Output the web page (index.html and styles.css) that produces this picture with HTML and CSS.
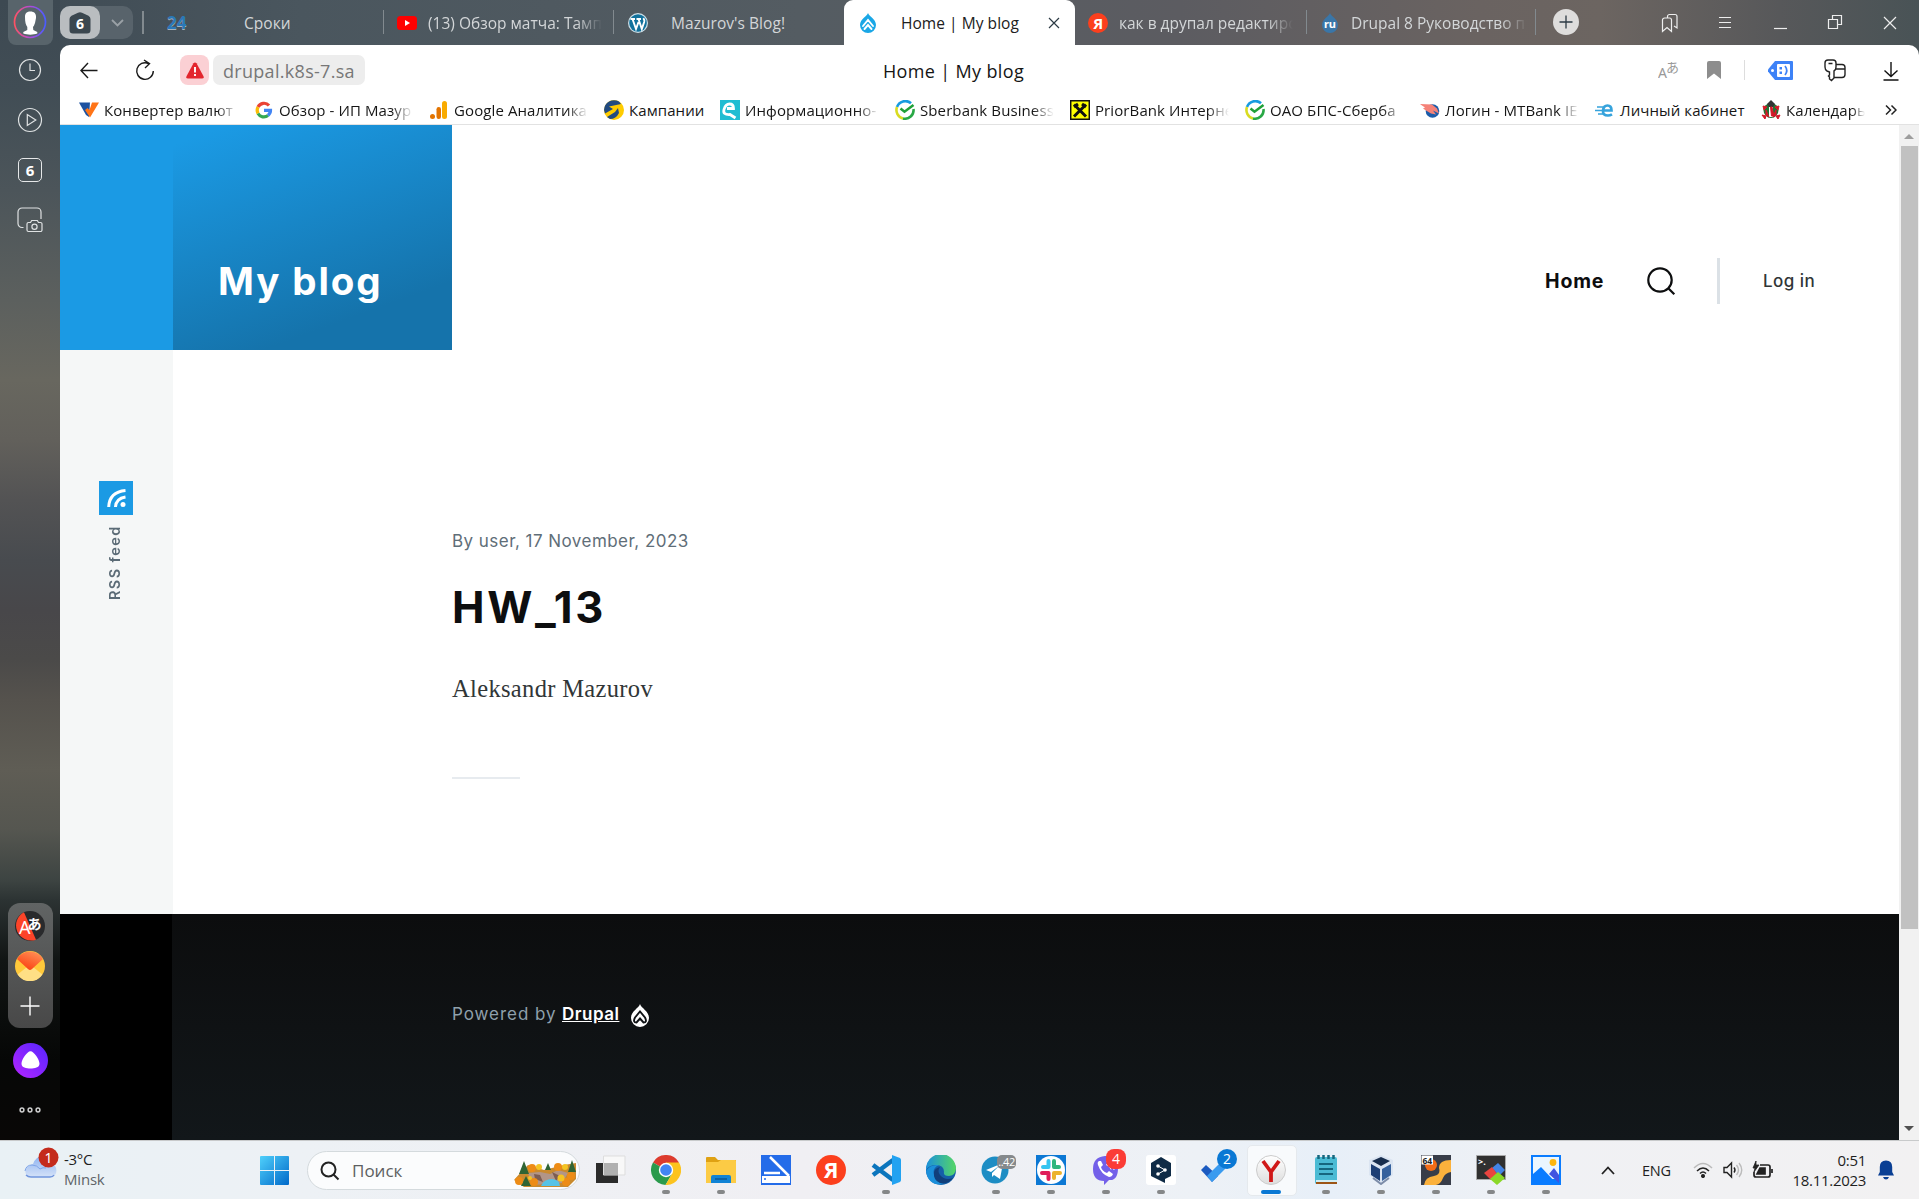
FILE: index.html
```html
<!DOCTYPE html>
<html lang="ru">
<head>
<meta charset="utf-8">
<title>Home | My blog</title>
<link rel="stylesheet" href="styles.css">
</head>
<body>
<div class="desktop">
  <div class="browser">
    <aside class="sidebar">
      <div class="avatar">
        <svg width="34" height="34" viewBox="0 0 34 34"><defs><linearGradient id="ring"><stop offset="0" stop-color="#ff5263"/><stop offset=".5" stop-color="#b14bd8"/><stop offset="1" stop-color="#4a5cff"/></linearGradient></defs><circle cx="17" cy="17" r="15.500" fill="none" stroke="url(#ring)" stroke-width="1.700"/><path d="M12 12c0-4 2-5.500 5.500-5.500s6 2 5.500 6.500l-1 5c-.7 2-1.200 3-2 4l.3 3 4 2v1.500c-4 1.500-10 1.500-14 0V27l4-2v-3c-1.500-2-2.300-5-2.300-10z" fill="#fff"/></svg>
      </div>
      <svg class="side-icon" viewBox="0 0 26 26"><circle cx="13" cy="13" r="10.500"/><path d="M13 6.500V13.500H18"/></svg>
      <svg class="side-icon" viewBox="0 0 26 26"><circle cx="13" cy="13" r="11.500"/><path d="M10.300 7.500v11l8.500-5.500z"/></svg>
      <div class="side-icon side-count">6</div>
      <svg class="side-icon" viewBox="0 0 26 26"><path d="M6.500 20.500H5a4 4 0 0 1-4-4V5a4 4 0 0 1 4-4h15a4 4 0 0 1 4 4v7"/><path d="M10 17a1.500 1.500 0 0 1 1.500-1.500h2l1.200-2h5.600l1.200 2h2a1.500 1.500 0 0 1 1.500 1.500v6a1.500 1.500 0 0 1-1.500 1.500h-12A1.500 1.500 0 0 1 10 23z"/><circle cx="17.500" cy="19.700" r="2.600"/></svg>
      <div class="side-apps">
        <svg width="30" height="30" viewBox="0 0 30 30"><circle cx="15" cy="15" r="15" fill="#292a2c"/><path d="M9 1.300A15 15 0 0 0 21 28.700z" fill="#fc4429"/><text x="4" y="23" font-size="18" fill="#fff" class="noto">A</text><text x="12.500" y="18" font-size="14" font-weight="700" fill="#fff" class="jp">あ</text></svg>
        <svg width="30" height="30" viewBox="0 0 30 30"><defs><linearGradient id="mail" x1="1" x2=".4" y2="1"><stop offset="0" stop-color="#ff9a5e"/><stop offset="1" stop-color="#fb4214"/></linearGradient></defs><circle cx="15" cy="15" r="15" fill="#ffc93b"/><path d="M2.500 23.500L12 16h6l9.500 7.500A15 15 0 0 1 2.500 23.500z" fill="#ffdf85"/><path d="M2 8A15 15 0 0 1 28 8L17 18q-2 1.800-4 0z" fill="url(#mail)"/></svg>
        <svg width="30" height="30" viewBox="0 0 30 30" stroke="#fff" stroke-width="1.400"><path d="M15 5.500v19M5.500 15h19"/></svg>
      </div>
      <svg class="alice" width="35" height="35" viewBox="0 0 35 35"><defs><linearGradient id="ali" x1="0" y1="1" x2="1" y2="0"><stop offset="0" stop-color="#b624ff"/><stop offset="1" stop-color="#5426ff"/></linearGradient></defs><circle cx="17.500" cy="17.500" r="17.500" fill="url(#ali)"/><path d="M17.500 8.300c3.500 0 9 8.500 9 12.500s-5 4.700-9 4.700-9-.7-9-4.700 5.500-12.500 9-12.500z" fill="#fff"/></svg>
      <svg class="more" width="24" height="8" viewBox="0 0 24 8" fill="none" stroke="#ccc" stroke-width="1.500"><circle cx="4" cy="4" r="1.900"/><circle cx="12" cy="4" r="1.900"/><circle cx="20" cy="4" r="1.900"/></svg>
    </aside>

    <div class="window">
      <div class="tabs">
        <div class="tab-group">
          <div class="group-count"><svg width="22" height="22" viewBox="0 0 22 22"><path d="M9 .8q2-1.100 4 0l6.500 3Q21.500 5 21.500 7v11q0 3.500-3.500 3.500H4Q.5 21.500.5 18V7q0-2 2-3.200z" fill="#3b474f"/><text x="11" y="16.500" text-anchor="middle" font-size="14" font-weight="700" fill="#fff" class="noto">6</text></svg></div>
          <svg width="33" height="33" viewBox="0 0 33 33" fill="none" stroke="#9aa1a6" stroke-width="1.800"><path d="M12 14l5.500 5.500L23 14"/></svg>
        </div>
        <div class="tab t1"><span class="fav b24">24</span><span class="tab-text s-deadlines">Сроки</span></div>
        <div class="tab t2"><svg class="fav" viewBox="0 0 20 20"><rect y="3" width="20" height="14" rx="3.500" fill="#f00"/><path d="M8 7v6l5-3z" fill="#fff"/></svg><span class="tab-text fade-tab">(13) Обзор матча: Тамп</span></div>
        <div class="tab t3"><svg class="fav" viewBox="0 0 20 20"><circle cx="10" cy="10" r="10" fill="#cfe0e8"/><circle cx="10" cy="10" r="8.800" fill="#11719c"/><path d="M2.500 6h4.500M4.500 6l3.500 10 2.500-7M8.500 6h4.500M10.500 6l3.300 10 2.400-7q.6-2-.9-3.800" stroke="#fff" stroke-width="1.900" fill="none"/></svg><span class="tab-text s-blog">Mazurov's Blog!</span></div>
        <div class="tab active"><svg class="fav" viewBox="0 0 20 20"><path d="M10 0c1 3.500 8 6 8 12a8 8 0 0 1-16 0C2 6 9 3.500 10 0z" fill="#1aa7e6"/><path d="M5 13L10 7l5 6M6.500 16L10 12l3.500 4" fill="none" stroke="#fff" stroke-width="1.900" stroke-linecap="round"/></svg><span class="tab-text s-home">Home | My blog</span><svg class="x" width="12" height="12" viewBox="0 0 12 12" stroke="#2c3a44" stroke-width="1.200"><path d="M1 1l10 10M11 1L1 11"/></svg></div>
        <div class="tab t5"><svg class="fav" viewBox="0 0 20 20"><circle cx="10" cy="10" r="10" fill="#fc3f1d"/><text x="10" y="15.500" text-anchor="middle" font-size="15" font-weight="700" fill="#fff" class="noto">Я</text></svg><span class="tab-text fade-tab">как в друпал редактирс</span></div>
        <div class="tab t6"><svg class="fav" viewBox="0 0 20 20"><path d="M10 0c1 3.500 8 6 8 12a8 8 0 0 1-16 0C2 6 9 3.500 10 0z" fill="#3a76a8"/><text x="10" y="15" text-anchor="middle" font-size="11" font-weight="700" fill="#fff" class="noto">ru</text></svg><span class="tab-text fade-tab">Drupal 8 Руководство п</span></div>
        <div class="new-tab"><svg width="26" height="26" viewBox="0 0 26 26"><circle cx="13" cy="13" r="13" fill="#dedddc"/><path d="M13 6.500v13M6.500 13h13" stroke="#2c3a44" stroke-width="1.300"/></svg></div>
        <div class="win-controls">
          <svg width="20" height="20" viewBox="0 0 20 20"><path d="M2.500 18.500V7a2 2 0 0 1 2-2h5a2 2 0 0 1 2 2v11.500L7 14.500zM7.500 5V3.500a2 2 0 0 1 2-2h5.500a2 2 0 0 1 2 2V15l-3-2"/></svg>
          <svg width="20" height="20" viewBox="0 0 20 20"><path d="M4 4.500h12M4 9.500h12M4 14.500h12"/></svg>
          <svg width="20" height="20" viewBox="0 0 20 20"><path d="M4 15.500h13"/></svg>
          <svg width="20" height="20" viewBox="0 0 20 20"><path d="M3.500 6.500h9v9h-9zM7.500 6.500v-4h9v9h-4"/></svg>
          <svg width="20" height="20" viewBox="0 0 20 20"><path d="M4 4l12 12M16 4L4 16"/></svg>
        </div>
      </div>

      <div class="chrome">
        <div class="toolbar">
          <svg class="back" width="20" height="20" viewBox="0 0 20 20"><path d="M18.500 10.500H2M9 3L2 10.500 9 18"/></svg>
          <svg class="reload" width="22" height="24" viewBox="0 0 22 24"><path d="M14.500 5.500A8.300 8.300 0 1 0 19.300 13M10 2l5.500 3.700L11 10"/></svg>
          <div class="warn"><svg width="18" height="17" viewBox="0 0 18 17"><path d="M7.500 1.200q1.500-1.600 3 0l7 13q.8 2.300-1.500 2.300H2Q-.3 16.500.5 14.200z" fill="#e3262e"/><path d="M9 5v5.500M9 12v2" stroke="#fff" stroke-width="1.900"/></svg></div>
          <div class="url">drupal.k8s-7.sa</div>
          <div class="page-title">Home | My blog</div>
          <div class="tool-icons">
            <svg width="22" height="26" viewBox="0 0 22 26" fill="#999"><text x="0" y="21" font-size="14" class="noto">A</text><text x="8" y="14.500" font-size="13" class="jp">あ</text></svg>
            <svg width="14" height="18" viewBox="0 0 14 18"><path d="M0 2q0-2 2-2h10q2 0 2 2v16l-7-5.500L0 18z" fill="#8d8d8d"/></svg>
            <i class="tool-sep"></i>
            <svg width="25" height="19" viewBox="0 0 25 19"><path d="M7 0h17q1 0 1 1v17q0 1-1 1H7L0 10.500v-2z" fill="#3d82f7"/><rect x="9" y="3" width="13" height="13" rx="1" fill="#fff"/><circle cx="4.500" cy="9.500" r="1.500" fill="#fff"/><path d="M11.500 6h2.500v2.500h-2.500zM11.500 10.500h2.500V13h-2.500z" fill="#3d82f7"/><path d="M17 5q3.500 4.500 0 9" stroke="#3d82f7" stroke-width="1.700" fill="none"/></svg>
            <svg width="24" height="24" viewBox="0 0 24 24" fill="none" stroke="#222" stroke-width="1.400"><path d="M4 13Q2 12 2 9V5q0-3 3-3h5q3 0 3 3v4q0 3-2 4v7l-2.500 2.500L6.500 21v-2l-1-1 1-1v-3zM5.500 5.500h4M13 6.500h6q3 0 3 3v7q0 3-3 3h-8M13 11h9"/></svg>
            <svg width="16" height="20" viewBox="0 0 16 20" fill="none" stroke="#111" stroke-width="1.400"><path d="M8 1v14M1.500 9.500L8 15.500l6.500-6M.5 19h15"/></svg>
          </div>
        </div>
        <div class="bookmarks">
          <div class="bm b1"><svg viewBox="0 0 20 20"><path d="M0 2.500h11L10 17 7 15z" fill="#1d52a0"/><path d="M13 2.500h7L11 17.500 6 10l2.500-2 2 2z" fill="#ff7417"/></svg><span>Конвертер валют</span></div>
          <div class="bm b2"><svg viewBox="0 0 20 20" fill="none" stroke-width="3.200"><path d="M15 5.500A6.700 6.700 0 0 0 4 7" stroke="#ea4335"/><path d="M4 7a6.700 6.700 0 0 0 0 6.500" stroke="#fbbc05"/><path d="M4 13.500a6.700 6.700 0 0 0 10 2" stroke="#34a853"/><path d="M14 15.500a6.700 6.700 0 0 0 2.500-5.200H10" stroke="#4285f4"/></svg><span>Обзор - ИП Мазур</span></div>
          <div class="bm b3"><svg viewBox="0 0 20 20"><rect x="13" y="1" width="5" height="18" rx="2.500" fill="#f9ab00"/><rect x="7.500" y="7" width="4.500" height="12" rx="2.200" fill="#e37400"/><circle cx="3.500" cy="16.500" r="2.500" fill="#e37400"/></svg><span>Google Аналитика</span></div>
          <div class="bm b4"><svg viewBox="0 0 20 20"><circle cx="10" cy="10" r="10" fill="#fc0"/><path d="M0 10A10 10 0 0 1 15 1.500L17 4 5 6.500 9 9l-8 4.500zM3 17l8-5 3-4 1 5q-3 6-9 6z" fill="#214a80"/></svg><span>Кампании</span></div>
          <div class="bm b5"><svg viewBox="0 0 20 20"><path d="M0 0h20v20H0z" fill="#20bdd2"/><path d="M7 8.500h6.500Q13.500 4 9.500 4T4 9.500t6 5l5.500 3.500" stroke="#fff" stroke-width="2.800" fill="none"/></svg><span>Информационно-</span></div>
          <div class="bm b6"><svg viewBox="0 0 20 20" fill="none" stroke-width="2.600"><path d="M16 3.300A8.700 8.700 0 0 0 2 7" stroke="#179be0"/><path d="M2 7a8.700 8.700 0 0 0 6 11.500" stroke="#d9dc21"/><path d="M8 18.500A8.700 8.700 0 0 0 18.500 9" stroke="#29a845"/><path d="M5.500 8.500l4 3.200L18.500 5" stroke="#21a038"/></svg><span>Sberbank Business</span></div>
          <div class="bm b7"><svg viewBox="0 0 20 20"><path d="M.7.700h18.600v18.600H.7z" fill="#ff0" stroke="#111" stroke-width="1.500"/><path d="M4 16.500l12-12M16 16.500l-12-12M4 7l4-3M16 7l-4-3" stroke="#111" stroke-width="3"/></svg><span>PriorBank Интерне</span></div>
          <div class="bm b8"><svg viewBox="0 0 20 20" fill="none" stroke-width="2.600"><path d="M16 3.300A8.700 8.700 0 0 0 2 7" stroke="#179be0"/><path d="M2 7a8.700 8.700 0 0 0 6 11.500" stroke="#d9dc21"/><path d="M8 18.500A8.700 8.700 0 0 0 18.500 9" stroke="#29a845"/><path d="M5.500 8.500l4 3.200L18.500 5" stroke="#21a038"/></svg><span>ОАО БПС-Сберба</span></div>
          <div class="bm b9"><svg viewBox="0 0 20 20"><circle cx="12.500" cy="11" r="6.800" fill="#1b5caa"/><path d="M0 4l12 .5 5 4 2 5-6-3 3 4-5-1-5-3-3-2 2-1-3-2z" fill="#f58278"/></svg><span>Логин - MTBank IE</span></div>
          <div class="bm b10"><svg viewBox="0 0 20 20" fill="none" stroke="#36a3dc"><path d="M2 7h6M0 10.500h8M3 14h6" stroke-width="1.300"/><path d="M8.500 10.500h8Q16.500 5.500 12.500 5.500T8 10.500t5 5q2 0 4-1.200" stroke-width="2.700"/></svg><span>Личный кабинет</span></div>
          <div class="bm b11"><svg viewBox="0 0 20 20"><circle cx="10" cy="10.500" r="7.500" fill="#247234"/><path d="M6 4l4-4 4 4-2 3H8z" fill="#333"/><path d="M8 7h4v10H8z" fill="#fff"/><path d="M9.500 7h1.500l2 9h-2.500zM1 15l4 1-1 3zM15 16l4-1-2 4zM2 6l4 1-3 3zM14 7l4-1-1 4zM5 10l3 7-3-2zM15 10l-3 7 3-2z" stroke="#d41928" fill="#d41928"/></svg><span>Календарь</span></div>
          <svg class="bm-more" width="12" height="12" viewBox="0 0 12 12" fill="none" stroke="#222" stroke-width="1.500"><path d="M1 1.500L5.500 6 1 10.500M6.500 1.500L11 6l-4.500 4.500"/></svg>
        </div>
      </div>

      <div class="viewport">
        <div class="page">
          <header class="site-header">
            <div class="brand-side"></div>
            <div class="brand">My blog</div>
            <nav class="nav">
              <a class="nav-home">Home</a>
              <svg class="nav-search" width="30" height="30" viewBox="0 0 30 30" fill="none" stroke="#0d0e0f" stroke-width="2.200"><circle cx="14" cy="14" r="11.700"/><path d="M22.300 22.300l6 6"/></svg>
              <i class="nav-sep"></i>
              <a class="nav-login">Log in</a>
            </nav>
          </header>
          <div class="site-main">
            <div class="social">
              <div class="rss-box"><svg width="19" height="18" viewBox="0 0 19 18" fill="none" stroke="#fff" stroke-width="3"><path d="M1.700 18Q2.500 3 18.500 1.600M8.500 18Q9 9.500 18.500 8"/><circle cx="16" cy="15.500" r="2.500" fill="#fff" stroke="none"/></svg></div>
              <div class="rss-text">RSS feed</div>
            </div>
            <article class="post">
              <div class="meta">By user, 17 November, 2023</div>
              <h1 class="post-title">HW_13</h1>
              <p class="post-body">Aleksandr Mazurov</p>
              <div class="rule"></div>
            </article>
          </div>
          <footer class="site-footer">
            <div class="foot-side"></div>
            <div class="foot-main"><span class="powered">Powered by</span><a class="drupal">Drupal</a>
              <svg width="18" height="23" viewBox="0 0 18 23"><path d="M9 0c1 4 9 7 9 14a9 9 0 0 1-18 0C0 7 8 4 9 0z" fill="#fff"/><path d="M4 13.500L9 7.500l5 6q2.500 5-1.500 5L9 14.500l-3.500 4q-4 0-1.500-5" fill="none" stroke="#101316" stroke-width="1.900"/></svg>
            </div>
          </footer>
        </div>
        <div class="scrollbar"><i class="arrow up"></i><i class="thumb"></i><i class="arrow down"></i></div>
      </div>
    </div>
  </div>

  <div class="taskbar">
    <div class="weather">
      <svg width="42" height="40" viewBox="0 0 42 40"><defs><linearGradient id="cl" x2="0" y2="1"><stop offset="0" stop-color="#8eb2f0"/><stop offset="1" stop-color="#d4e2f8"/></linearGradient></defs><path d="M7 32a6 6 0 0 1 0-11 8 8 0 0 1 4-2q3-8 10-8 7 0 9 8a7 7 0 0 1 0 13z" fill="url(#cl)"/><path d="M3 26q1-6 7-6 5 0 8 4 3-2 6-1" stroke="#7ea5e8" fill="none"/><path d="M4 30q2 2 5 2h19q3 0 4-2" stroke="#7095dd" stroke-width="1.500" fill="none"/><circle cx="26.500" cy="12.500" r="10" fill="#c42b1c"/><text x="26.500" y="17.500" text-anchor="middle" font-size="14" fill="#fff" class="noto">1</text></svg>
      <div class="weather-text"><div>-3°C</div><div class="city">Minsk</div></div>
    </div>
    <svg class="start" width="29" height="29" viewBox="0 0 29 29"><defs><linearGradient id="win" x2="1" y2="1"><stop offset="0" stop-color="#4fd0fb"/><stop offset="1" stop-color="#0169c9"/></linearGradient></defs><path d="M0 1q0-1 1-1h13v14H0zM15 0h13q1 0 1 1v13H15zM0 15h14v14H1q-1 0-1-1zM15 15h14v13q0 1-1 1H15z" fill="url(#win)"/></svg>
    <div class="search">
      <svg width="20" height="20" viewBox="0 0 20 20" fill="none" stroke="#222" stroke-width="2"><circle cx="8.500" cy="8.500" r="7"/><path d="M13.500 13.500l5 5"/></svg>
      <span>Поиск</span>
      <svg class="scene" width="62" height="27" viewBox="0 0 62 27"><path d="M0 20l8-9 6-6 16 5 20-5 12-2v16l-8 8H10z" fill="#c98a2e"/><path d="M14 13l12-1 10 2 8-4 10 3-6 10-30 2z" fill="#b29587"/><path d="M20 14l6 1 3 7-8-3zM38 12l8 4-4 5z" fill="#7d5d52"/><path d="M27 26q3-7 11-7 8 1 8 7z" fill="#55c3e6"/><path d="M10 1l5 13H5zM58 0l4 12h-8zM34 3l3 7h-6zM12 16l5 10H7z" fill="#2f6434"/><g fill="#ed8c16"><circle cx="5" cy="21" r="4"/><circle cx="18" cy="8" r="4"/><circle cx="20" cy="22" r="4"/><circle cx="44" cy="7" r="4"/><circle cx="57" cy="16" r="4"/><circle cx="52" cy="22" r="4"/></g><g fill="#f4c423"><circle cx="25" cy="7" r="3"/><circle cx="47" cy="18" r="3.500"/><circle cx="51" cy="7" r="3"/><circle cx="16" cy="18" r="2"/></g></svg>
    </div>
    <div class="apps">
      <div class="app"><svg viewBox="0 0 30 30"><path d="M0 8h22v20H0z" fill="#2b2b2b"/><path d="M7.500 1h21.500v19H7.500z" fill="#f8f8f8" stroke="#ddd"/><path d="M8 8h14v12H8z" fill="#b0b0b0"/></svg></div>
      <div class="app on"><svg viewBox="0 0 30 30"><path d="M15 15L2 7.500A15 15 0 0 1 28 7.500z" fill="#dd3b2e"/><path d="M15 15L2 7.500A15 15 0 0 0 14.500 30L21.500 18z" fill="#2a9a4c"/><path d="M15 15V7.500h13A15 15 0 0 1 14.500 30L21.500 18z" fill="#fcc31e"/><circle cx="15" cy="15" r="7.200" fill="#fff"/><circle cx="15" cy="15" r="5.800" fill="#4285f4"/></svg></div>
      <div class="app on"><svg viewBox="0 0 30 30"><path d="M0 3q0-1 1-1h8l3 3h18v8H0z" fill="#dfa113"/><path d="M0 7h12l3-2h14q1 0 1 1v22H0z" fill="#fccb45"/><path d="M5 28v-6q0-2 2-2h16q2 0 2 2v6z" fill="#1183d5"/><path d="M9 24h12" stroke="#0a5796" stroke-width="1.500"/></svg></div>
      <div class="app"><svg viewBox="0 0 30 30"><path d="M0 0h30v30H0z" fill="#246ce9"/><path d="M9 2l19 19M3 18h16" stroke="#fff" stroke-width="2.500"/><path d="M1 21h28v7H1z" fill="#fff"/><circle cx="4" cy="24" r="1" fill="#246ce9"/></svg></div>
      <div class="app"><svg viewBox="0 0 30 30"><circle cx="15" cy="15" r="15" fill="#fc3f1d"/><text x="15" y="23" text-anchor="middle" font-size="22" font-weight="700" fill="#fff" class="noto">Я</text></svg></div>
      <div class="app on"><svg viewBox="0 0 30 30"><path d="M2 10l20 15M2 20L22 5" stroke="#0b75bd" stroke-width="4.500"/><path d="M21 0l8 3q1 1 1 2v20q0 1-1 2l-8 3z" fill="#22a2f1"/></svg></div>
      <div class="app"><svg viewBox="0 0 30 30"><defs><linearGradient id="ed"><stop offset="0" stop-color="#1b90dc"/><stop offset="1" stop-color="#55d765"/></linearGradient></defs><circle cx="15" cy="15" r="15" fill="#155fa8"/><path d="M0 15A15 15 0 0 1 30 13q0 7-7 8-6 0-5-4 0-7-8-7-7 0-10 5z" fill="url(#ed)"/><path d="M13 10q-7 3-5 10 2 8 11 9-17 3-19-13 4-7 13-6z" fill="#1b8fda"/><path d="M14 12q-3 4 0 8 5 6 13 3-5 7-13 5-7-3-6-11 1-4 6-5z" fill="#113f7b"/></svg></div>
      <div class="app on"><svg viewBox="0 0 30 30"><circle cx="14" cy="15" r="13.500" fill="#1d8dc4"/><path d="M5 15L22 8l-3 16-6-4-2 2v-4l7-7-8 6z" fill="#fff"/></svg><b class="badge grey">..42</b></div>
      <div class="app on"><svg viewBox="0 0 30 30"><path d="M0 0h30v30H0z" fill="#0c78d4"/><circle cx="15" cy="15" r="14" fill="#fff"/><g stroke-width="4" stroke-linecap="round"><path d="M12.500 6v6M7 12h5" stroke="#36c5f0"/><path d="M18 6v6M18 12h5" stroke="#2eb67d"/><path d="M18 18h6M18 18v5" stroke="#ecb22e"/><path d="M6 18h6M12.500 18v6" stroke="#e01e5a"/></g></svg></div>
      <div class="app on"><svg viewBox="0 0 30 30"><path d="M14 1q13-1 13 12t-9 12l-5 5v-4Q2 26 2 14T14 1z" fill="#7360e9"/><path d="M8 6q-2 1-1 4 3 9 11 12 3 0 4-3l-4-3-2 2q-5-2-6-6l2-2-2-4z" fill="#fff"/><path d="M15 6q8 1 8 9M15 9.500q4 1 5 5" stroke="#fff" fill="none"/></svg><b class="badge red">4</b></div>
      <div class="app on"><svg viewBox="0 0 30 30"><rect width="30" height="30" rx="3" fill="#fff"/><path d="M15 2l10 6v13l-6 3v4l-4-2-10-5V8z" fill="#0f2b46"/><path d="M12 11l7 4-7 4" stroke="#fff" fill="none"/><g fill="#fff"><circle cx="12" cy="11" r="1.800"/><circle cx="19" cy="15" r="1.800"/><circle cx="12" cy="19" r="1.800"/></g></svg></div>
      <div class="app"><svg viewBox="0 0 30 30"><path d="M0 15l5-5 12 11-6 6z" fill="#1b5ac0"/><path d="M6 21L22 5l6 5-17 17z" fill="#3a9bef"/></svg><b class="badge blue">2</b></div>
      <div class="app current"><svg viewBox="0 0 30 30"><defs><linearGradient id="yb" x2="0" y2="1"><stop offset="0" stop-color="#fff"/><stop offset="1" stop-color="#ddd"/></linearGradient></defs><circle cx="15" cy="15" r="14.500" fill="url(#yb)" stroke="#ccc"/><path d="M7 6l8 11v10M23 6l-8 11" stroke="#d01818" stroke-width="3.800" fill="none"/></svg></div>
      <div class="app on"><svg viewBox="0 0 30 30"><rect x="4" y="2" width="22" height="27" rx="2" fill="#4bbbd4"/><path d="M5 28h21" stroke="#9c5516" stroke-width="2"/><path d="M5 26h21" stroke="#fff" stroke-width="1.500"/><path d="M8 9h14M8 14h14M8 19h14" stroke="#16677e" stroke-width="2"/><path d="M7.500 0v4M12.500 0v4M17.500 0v4M22.500 0v4" stroke="#16677e" stroke-width="2.500"/></svg></div>
      <div class="app on"><svg viewBox="0 0 30 30"><path d="M3 5l12-5 12 5v15L15 29 3 20z" fill="#dbe5f2"/><path d="M6 6l9-4 9 4-9 5z" fill="#182e4e"/><path d="M5 9l9 5v12l-9-6z" fill="#1d3f75"/><path d="M25 9l-9 5v12l9-6z" fill="#35619d"/><path d="M7 23l8 6 8-6" fill="none" stroke="#7c8ca8" stroke-width="2"/></svg></div>
      <div class="app on"><svg viewBox="0 0 30 30"><path d="M0 0h30v30H0z" fill="#383d49"/><path d="M3 30q1-8 10-9 7-1 5-8 0-8 12-8v12q-6 1-8 6-3 8-10 7z" fill="#fbb13c"/><circle cx="10" cy="10" r="6" fill="#f36b16"/><path d="M.5.500h11.500v9H.5z" fill="#fff"/><text x="1.500" y="8.500" font-size="8.500" font-weight="700" fill="#222" class="noto">64</text></svg></div>
      <div class="app on"><svg viewBox="0 0 30 30"><path d="M.5.500h29v24H.5z" fill="#303030" stroke="#aaa"/><text x="2" y="10" font-size="9" font-weight="700" fill="#fff" class="noto">&gt;.</text><path d="M16 13l6-5 7 7-6 6z" fill="#4284e4"/><path d="M8 18l8-6 6 8-7 5z" fill="#e9443f"/><path d="M14 24l8-7 7 6-8 7z" fill="#8bd828"/></svg></div>
      <div class="app on"><svg viewBox="0 0 30 30"><path d="M0 0h30v30H0z" fill="#0a7cff"/><path d="M2 2h26v22H2z" fill="#eaf6ff"/><path d="M18 19l5-6 5 7v8z" fill="#4053e0"/><path d="M2 19l8-7 16 17H2z" fill="#0a7cff"/><circle cx="22" cy="7.500" r="3.400" fill="#fdb60d"/></svg></div>
    </div>
    <div class="tray">
      <svg width="14" height="9" viewBox="0 0 14 9" fill="none" stroke="#222" stroke-width="1.800"><path d="M1 8l6-6.500L13 8"/></svg>
      <span class="lang">ENG</span>
      <svg class="wifi" width="20" height="16" viewBox="0 0 20 16" fill="none" stroke="#222" stroke-width="1.500"><path d="M1 6Q10-3 19 6" stroke="#bbb"/><path d="M4 9q6-6 12 0M7 11.500q3-3 6 0"/><circle cx="10" cy="14" r="1.300" fill="#222"/></svg>
      <svg class="vol" width="20" height="18" viewBox="0 0 20 18" fill="none" stroke="#222" stroke-width="1.400"><path d="M1 6.500h3L8.500 2v14L4 11.500H1zM11 6.500q2 2.500 0 5"/><path d="M13.500 4q4 5 0 10M16 2q5.500 7 0 14" stroke="#bbb"/></svg>
      <svg class="bat" width="21" height="18" viewBox="0 0 21 18" fill="none" stroke="#222" stroke-width="1.700"><path d="M8 4h8q2 0 2 2v8q0 2-2 2H4q-2 0-2-2v-3M20 8v4"/><path d="M8 7h5v6H5z" fill="#222"/><path d="M4 0L1 7h2l-1 4 5-7H4z" fill="#222" stroke-width=".8"/></svg>
      <div class="clock"><div>0:51</div><div>18.11.2023</div></div>
      <svg width="18" height="20" viewBox="0 0 18 20" fill="#0a3f94"><path d="M1 15.500l1.800-3.500V7q0-6.500 6.200-6.500T15.200 7v5L17 15.500zM6 17h6q-1 2.500-3 2.500T6 17z"/></svg>
    </div>
  </div>
</div>
</body>
</html>
```
FILE: styles.css
```css
* { box-sizing: border-box; }
body { margin: 0; }
svg { flex: none; display: block; }
.desktop { width: 1919px; height: 1199px; display: flex; flex-direction: column; overflow: hidden; font-family: "Open Sans", "Noto Sans", sans-serif; }
.noto { font-family: "Noto Sans", sans-serif; }
.jp { font-family: "Noto Sans CJK JP", sans-serif; }

.browser { height: 1140px; display: flex; background: linear-gradient(90deg, #3e4a53 0, #4a565e 300px, #545c62 800px, #5c5c61 1180px, #6a6361 1480px, #6c6561 1600px, #57585a 1780px, #495356 1919px); }

.sidebar { width: 60px; display: flex; flex-direction: column; align-items: center; background: linear-gradient(180deg, #3d4952 0, #414d55 90px, #4c555a 190px, #5c605e 300px, #68675f 380px, #62605b 440px, #535354 500px, #484b4f 560px, #48474a 610px, #4b4a49 660px, #55524d 700px, #5f5d55 770px, #555650 830px, #3d4442 880px, #2c3333 900px, #111514 960px, #060706 1060px, #090706 1140px); }
.avatar { width: 45px; height: 45px; border-radius: 0 0 8px 8px; background: #58646b; display: flex; justify-content: center; padding-top: 5px; }
.side-icon { width: 26px; height: 26px; fill: none; stroke: #dfe2e3; stroke-width: 1.2; margin-bottom: 24px; }
.avatar + .side-icon { margin-top: 12px; }
.side-count { width: 24px; height: 24px; border: 1.4px solid #e6e8e9; border-radius: 5px; margin: 1px 0 25px; color: #fff; font-size: 15px; font-weight: 700; line-height: 22px; text-align: center; }
.side-apps { width: 45px; height: 125px; margin-top: 646px; border-radius: 12px; background: linear-gradient(#616464, #484848); padding-top: 8px; display: flex; flex-direction: column; align-items: center; gap: 10px; }
.alice { margin-top: 15px; }
.more { margin-top: 28px; }

.window { width: 1859px; display: flex; flex-direction: column; }
.tabs { height: 45px; display: flex; align-items: stretch; color: #d3d6d8; }
.tab-group { width: 73px; height: 33px; margin: 6px 10px 0 0; border-radius: 10px; background: #58636b; display: flex; }
.group-count { width: 40px; border-radius: 10px; background: #b9bdc0; display: flex; align-items: center; justify-content: center; }
.tab { display: flex; align-items: center; width: 230px; position: relative; }
.tab::before { content: ""; position: absolute; left: 0; top: 10px; width: 1px; height: 24px; background: #828a8f; }
.tab.active::before, .t5::before { display: none; }
.tab .fav { width: 20px; height: 20px; flex: none; }
.tab-text { font-size: 15.5px; white-space: nowrap; letter-spacing: 0.05px; line-height: 24px; margin-top: 1px; }
.t1 { width: 240px; padding-left: 24px; }
.tab.t1::before { width: 2px; top: 11px; height: 23px; left: -1px; }
.b24 { color: #2a78b8; font-weight: 700; font-size: 17px; line-height: 20px; letter-spacing: 0; text-shadow: 0 1px 0 #a8b2ba; }
.s-deadlines { margin-left: 57px; }
.t2 { padding-left: 14px; }
.fade-tab { width: 174px; margin-left: 11px; letter-spacing: 0; mask-image: linear-gradient(90deg, #000 85%, transparent); }
.t3 { padding-left: 15px; width: 231px; }
.s-blog { margin-left: 23px; }
.active { width: 231px; background: #fff; border-radius: 9px 9px 0 0; color: #202020; padding-left: 14px; }
.s-home { margin-left: 23px; width: 147px; }
.t5 { width: 231px; padding-left: 13px; }
.t6 { width: 229px; padding-left: 14px; }
.t6 .fade-tab { width: 176px; margin-left: 11px; }
.new-tab { width: 116px; padding: 9px 0 0 17px; border-left: 1px solid transparent; border-image: linear-gradient(transparent 10px, #828a8f 10px, #828a8f 34px, transparent 34px) 1; }
.win-controls { display: flex; gap: 35px; padding-top: 13px; margin-left: 9px; fill: none; stroke: #eee; stroke-width: 1.2; }

.chrome { height: 80px; background: #fff; border-radius: 10px 10px 0 0; border-bottom: 1px solid #e2e2e2; }
.toolbar { height: 50px; display: flex; align-items: center; }
.back { margin: 0 0 0 19px; }
.reload { margin: 0 0 0 35px; }
.back, .reload { fill: none; stroke: #1a1a1a; stroke-width: 1.4; }
.warn { width: 29px; height: 30px; margin-left: 24px; border-radius: 8px; background: #fbd0d4; display: flex; align-items: center; justify-content: center; }
.url { width: 152px; height: 30px; margin-left: 4px; border-radius: 7px; background: #ededed; color: #777; font-size: 18px; letter-spacing: 0.3px; line-height: 32px; padding-left: 10px; white-space: nowrap; }
.page-title { margin-left: 518px; width: 775px; font-size: 18px; letter-spacing: 0.35px; color: #151515; white-space: nowrap; padding-top: 1px; }
.tool-icons { display: flex; align-items: center; }
.tool-icons > :nth-child(2) { margin-left: 27px; }
.tool-sep { width: 1px; height: 20px; background: #ddd; margin: 0 23px 0 23px; }
.tool-icons > :nth-child(5) { margin-left: 30px; }
.tool-icons > :nth-child(6) { margin-left: 36px; margin-top: 2px; }

.bookmarks { height: 30px; display: flex; align-items: center; padding-left: 19px; }
.bm { width: 175px; display: flex; align-items: center; flex: none; }
.bm svg { width: 20px; height: 20px; }
.bm span { width: 134px; margin-left: 5px; font-size: 15px; letter-spacing: 0.1px; line-height: 22px; color: #161616; white-space: nowrap; mask-image: linear-gradient(90deg, #000 84%, transparent); }
.b4 { width: 116px; }
.b4 span { width: 80px; mask-image: none; }
.b10 { width: 166px; }
.b10 span { width: 130px; mask-image: none; }
.b11 { width: 124px; }
.b11 span { width: 79px; }

.viewport { height: 1015px; display: flex; }
.page { width: 1839px; background: #fff; font-family: Inter, sans-serif; }
.site-header { height: 225px; display: flex; }
.brand-side { width: 113px; background: #1b9ae4; }
.brand { width: 279px; background: linear-gradient(160deg, #1b9ae4 6%, #1573ab 79%); color: #fff; font-size: 38.5px; font-weight: 700; letter-spacing: 1.9px; line-height: 48px; padding: 132px 0 0 45px; white-space: nowrap; }
.nav { margin-left: auto; padding: 61px 84px 0 0; height: 250px; display: flex; align-items: center; }
.nav-home { font-size: 19.5px; font-weight: 700; letter-spacing: 0.85px; color: #0d0e0f; width: 101px; }
.nav-search { margin-right: 41px; }
.nav-sep { width: 3px; height: 46px; background: #dbe1e6; margin-right: 43px; }
.nav-login { width: 52px; font-size: 17px; font-weight: 500; letter-spacing: 0.45px; color: #313637; white-space: nowrap; }
.site-main { height: 564px; display: flex; }
.social { width: 113px; background: #f5f7f7; padding: 131px 0 0 39px; }
.rss-box { width: 34px; height: 34px; background: #1b9ae4; display: flex; align-items: center; justify-content: center; }
.rss-text { margin: 10px 0 0 6px; writing-mode: vertical-rl; transform: rotate(180deg); width: 20px; height: 75px; font-size: 14.5px; line-height: 20px; font-weight: 600; letter-spacing: 1.4px; color: #5b6b76; white-space: nowrap; }
.post { padding: 178px 0 0 279px; }
.meta { font-size: 17px; letter-spacing: 0.46px; line-height: 26px; color: #5f6e78; white-space: nowrap; }
.post-title { margin: 26px 0 0; font-size: 43.5px; line-height: 54px; font-weight: 700; letter-spacing: 2.7px; color: #0d0e0f; white-space: nowrap; }
.post-body { margin: 39px 0 0; font-family: "Liberation Serif", serif; font-size: 24.5px; letter-spacing: 0.34px; line-height: 32px; color: #313637; white-space: nowrap; }
.rule { width: 68px; height: 2px; background: #e7ebef; margin-top: 72px; }
.site-footer { height: 226px; display: flex; }
.foot-side { width: 112px; background: #000; }
.foot-main { flex: 1; background: linear-gradient(#0c0d0e, #12171a); padding: 87px 0 0 280px; display: flex; align-items: flex-start; font-size: 17px; line-height: 26px; color: #8fa0ab; }
.powered { width: 110px; letter-spacing: 0.95px; white-space: nowrap; }
.drupal { width: 69px; color: #fff; text-decoration: underline; font-weight: 600; letter-spacing: 0.5px; }
.foot-main svg { margin-top: 3px; }
.scrollbar { width: 20px; background: #f1f1f1; display: flex; flex-direction: column; align-items: center; }
.arrow { width: 0; height: 0; border: 5px solid transparent; }
.up { border-bottom-color: #9d9d9d; border-top: 0; margin: 9px 0 7px; }
.thumb { width: 17px; height: 783px; background: #c1c1c1; }
.down { border-top-color: #505050; border-bottom: 0; margin-top: auto; margin-bottom: 9px; }

.taskbar { height: 59px; border-top: 1px solid #c8cacb; background: linear-gradient(90deg, #e9f1f5 0, #edf1f5 300px, #f0eff3 800px, #edf1f6 1200px, #e7eff8 1330px, #f0f1f4 1560px, #f2f1f2 1919px); display: flex; color: #1e1e1e; }
.weather { width: 260px; padding: 4px 0 0 22px; display: flex; }
.weather-text { font-size: 15px; line-height: 20px; padding-top: 4px; letter-spacing: -0.3px; }
.city { color: #606468; letter-spacing: -0.2px; }
.start { margin-top: 15px; }
.search { width: 273px; height: 39px; margin: 10px 0 0 18px; border: 1px solid #d4dadd; border-radius: 20px; background: #fbfcfd; display: flex; align-items: center; padding-left: 13px; font-size: 17px; color: #5d5f61; }
.search > svg:first-child { margin-left: -1px; }
.search span { margin-left: 12px; width: 162px; }
.scene { margin-top: 5px; }
.apps { display: flex; margin-left: 3px; }
.app { width: 55px; height: 58px; position: relative; padding: 14px 0 0 13px; }
.app svg { width: 30px; height: 30px; position: relative; }
.on::after, .current::after { content: ""; position: absolute; left: 24px; top: 49px; width: 8px; height: 4px; border-radius: 2px; background: #858788; }
.current::before { content: ""; position: absolute; left: 4px; top: 4px; width: 48px; height: 49px; border-radius: 5px; background: #f8fafc; border: 1px solid #e5e9ed; }
.current::after { left: 18px; width: 20px; background: #0a78d4; }
.badge { position: absolute; left: 31px; top: 8px; width: 20px; height: 20px; border-radius: 10px; color: #fff; font-size: 14px; font-weight: 400; line-height: 20px; text-align: center; }
.grey { left: 29px; top: 14px; width: 19px; height: 14px; border-radius: 5px; background: #85898c; font-size: 11px; line-height: 14px; letter-spacing: -0.5px; }
.red { left: 28px; background: #fb3c36; border-radius: 8px; }
.blue { left: 29px; background: #0a78d4; }
.tray { display: flex; align-items: center; margin-left: 28px; height: 58px; }
.lang { margin-left: 27px; width: 51px; font-size: 14.5px; letter-spacing: -0.2px; }
.vol { margin-left: 10px; }
.bat { margin-left: 9px; }
.clock { width: 93px; text-align: right; font-size: 15px; line-height: 20px; letter-spacing: -0.3px; margin-right: 11px; }
```
